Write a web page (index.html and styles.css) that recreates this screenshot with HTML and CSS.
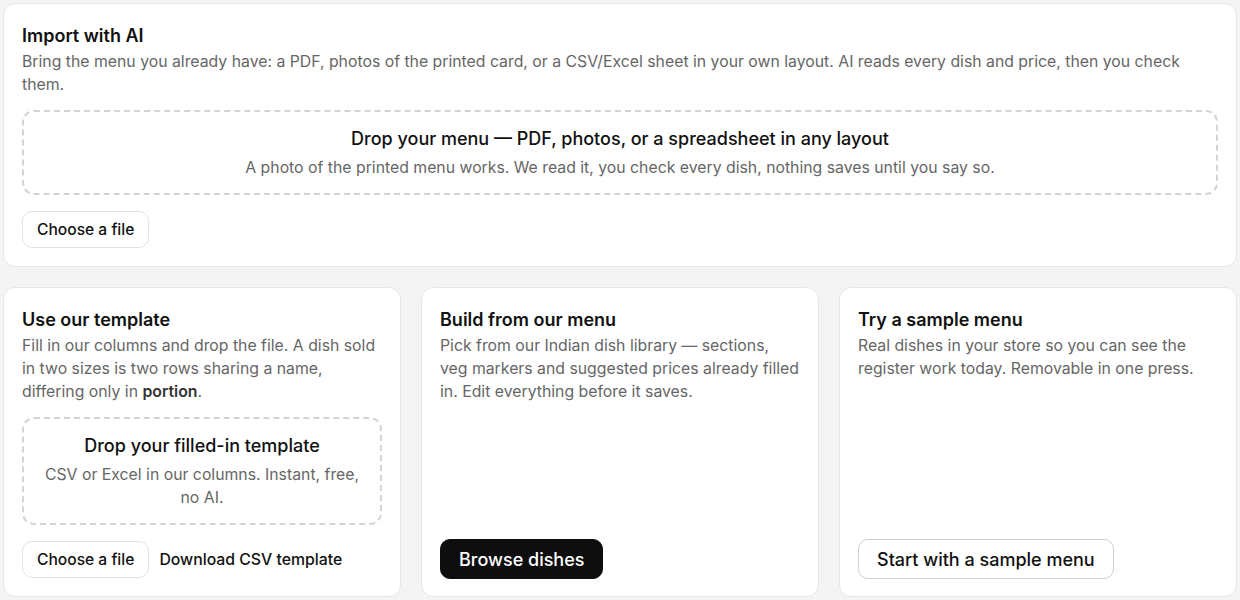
FILE: index.html
```html
<!DOCTYPE html>
<html>

<head>
  <meta http-equiv="Content-Type" content="text/html; charset=utf-8">
  <link rel="stylesheet" href="styles.css">
</head>

<body>

  <div class="import-page">

    <section class="card">
      <h2 class="card-title">Import with AI</h2>
      <p class="card-text">Bring the menu you already have: a PDF, photos of the printed card, or a CSV/Excel sheet in your own layout. AI reads every dish and price, then you check them.</p>
      <div class="dropzone">
        <div class="drop-title">Drop your menu — PDF, photos, or a spreadsheet in any layout</div>
        <div class="drop-text">A photo of the printed menu works. We read it, you check every dish, nothing saves until you say so.</div>
      </div>
      <div class="actions">
        <button class="btn">Choose a file</button>
      </div>
    </section>

    <div class="options">
      <section class="card">
        <h2 class="card-title">Use our template</h2>
        <p class="card-text">Fill in our columns and drop the file. A dish sold in two sizes is two rows sharing a name, differing only in <strong>portion</strong>.</p>
        <div class="dropzone">
          <div class="drop-title">Drop your filled-in template</div>
          <div class="drop-text">CSV or Excel in our columns. Instant, free, no AI.</div>
        </div>
        <div class="actions">
          <button class="btn">Choose a file</button>
          <a class="link" href="#">Download CSV template</a>
        </div>
      </section>

      <section class="card">
        <h2 class="card-title">Build from our menu</h2>
        <p class="card-text">Pick from our Indian dish library — sections, veg markers and suggested prices already filled in. Edit everything before it saves.</p>
        <div class="actions bottom">
          <button class="btn btn-big btn-dark">Browse dishes</button>
        </div>
      </section>

      <section class="card">
        <h2 class="card-title">Try a sample menu</h2>
        <p class="card-text">Real dishes in your store so you can see the register work today. Removable in one press.</p>
        <div class="actions bottom">
          <button class="btn btn-big">Start with a sample menu</button>
        </div>
      </section>
    </div>

  </div>

</body>

</html>
```

FILE: styles.css
```css
body {
  margin: 0;
  background-color: #f4f4f4;
  font-family: Inter, "Noto Sans", sans-serif;
  color: #111;
}

.import-page {
  padding: 3px;
  display: flex;
  flex-direction: column;
  gap: 20px;
}

.options {
  display: grid;
  grid-template-columns: repeat(3, 1fr);
  gap: 20px;
}

.card {
  display: flex;
  flex-direction: column;
  background-color: #fff;
  border: 1px solid #e6e6e6;
  border-radius: 12px;
  padding: 18px;
}

.card-title {
  margin: 0;
  font-size: 18px;
  line-height: 28px;
  font-weight: 600;
  color: #111;
}

.card-text {
  margin: 0;
  font-size: 15.8px;
  line-height: 23px;
  color: #666;
}

.card-text strong {
  color: #333;
  font-weight: 600;
}

.dropzone {
  margin-top: 14px;
  border: 2px dashed #d4d4d4;
  border-radius: 12px;
  padding: 14px 18px;
  text-align: center;
}

.drop-title {
  font-size: 18px;
  line-height: 26px;
  font-weight: 500;
  color: #111;
  margin-bottom: 4px;
}

.drop-text {
  font-size: 15.8px;
  line-height: 23px;
  color: #666;
}

.actions {
  margin-top: 16px;
  display: flex;
  align-items: center;
  gap: 10px;
}

.actions.bottom {
  margin-top: auto;
}

.btn {
  font-family: inherit;
  font-size: 15.6px;
  font-weight: 500;
  color: #111;
  background-color: #fff;
  border: 1px solid #e2e2e2;
  border-radius: 10px;
  height: 37px;
  padding: 0 14px;
  cursor: pointer;
}

.btn-big {
  font-size: 18px;
  height: 40px;
  padding: 0 18px;
  border-color: #cfcfcf;
  margin-bottom: -1px;
}

.btn-dark {
  background-color: #0e0e0e;
  border-color: #0e0e0e;
  color: #fff;
}

.link {
  font-size: 15.8px;
  font-weight: 500;
  color: #111;
  text-decoration: none;
}
```
